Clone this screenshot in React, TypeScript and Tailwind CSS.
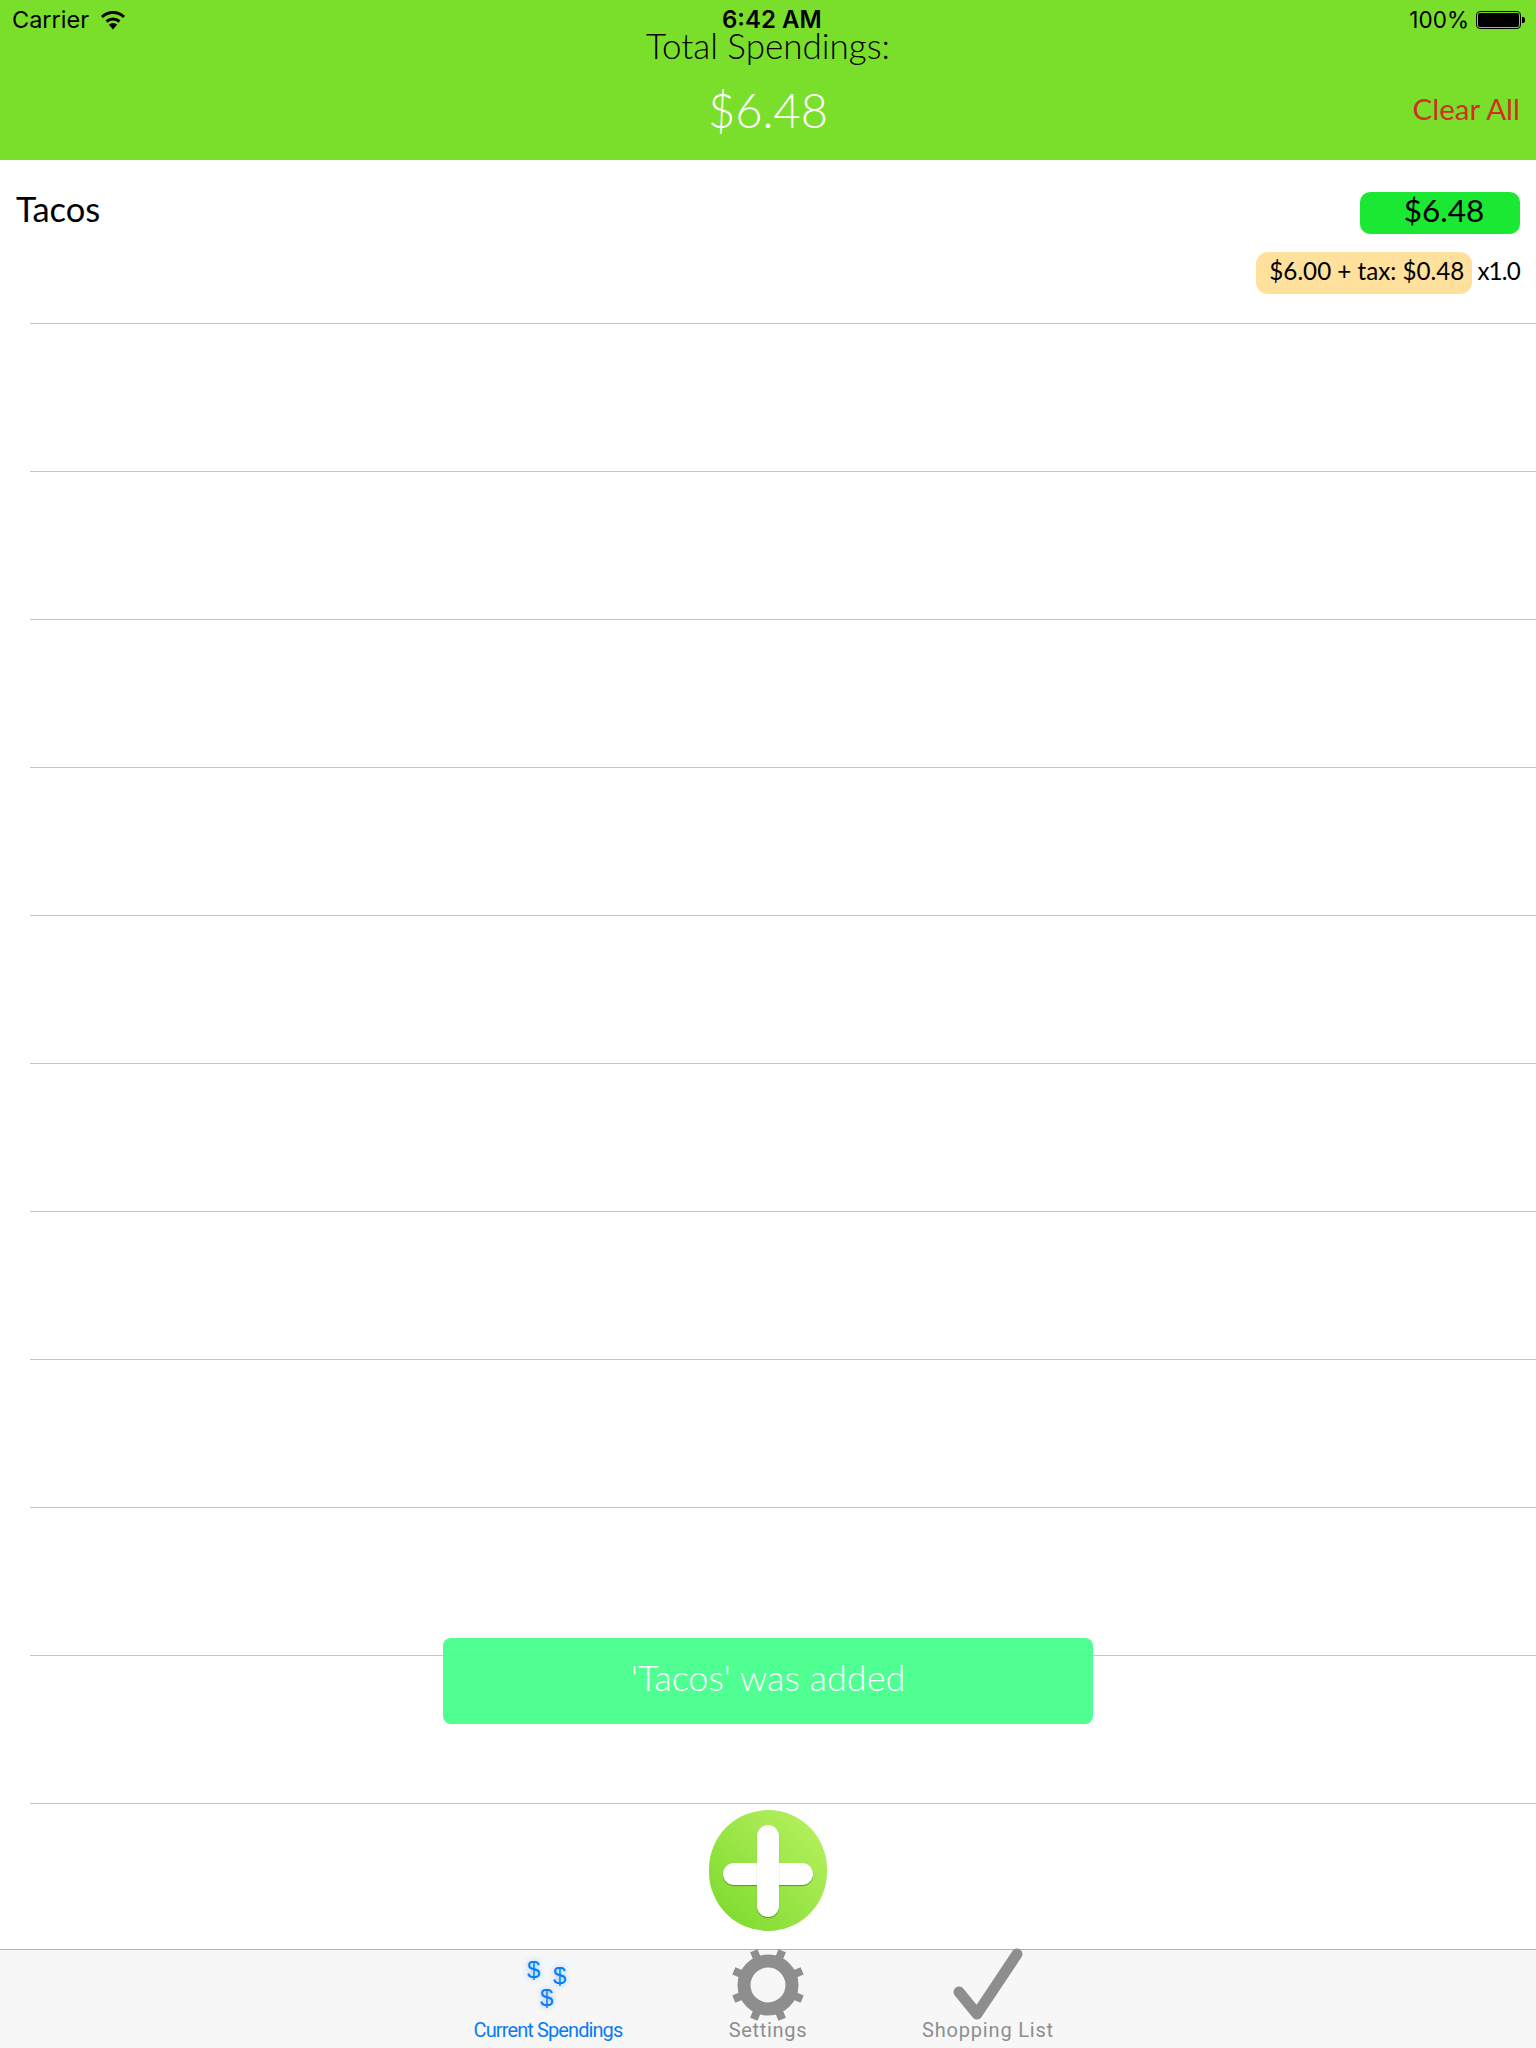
const ROWS = [0, 1, 2, 3, 4, 5, 6, 7, 8, 9];

function Wifi() {
  return (
    <svg width="26" height="20" viewBox="0 0 26 20" fill="none" stroke="#000" strokeWidth="3">
      <path d="M2 7 A16 16 0 0 1 24 7" />
      <path d="M6.5 11.5 A10 10 0 0 1 19.5 11.5" />
      <path d="M13 19.5 L8.8 14.6 A6 6 0 0 1 17.2 14.6 Z" fill="#000" stroke="none" />
    </svg>
  );
}

function Battery() {
  return (
    <svg width="49" height="20" viewBox="0 0 49 20">
      <rect x="0.5" y="1.5" width="44" height="17" rx="3.5" fill="none" stroke="#000" strokeWidth="1" />
      <rect x="2" y="3" width="41" height="14" rx="2" fill="#000" />
      <path d="M46 7 h1 a2 2 0 0 1 2 2 v2 a2 2 0 0 1 -2 2 h-1 z" fill="#000" />
    </svg>
  );
}

function Gear() {
  const teeth = [22.5, 67.5, 112.5, 157.5, 202.5, 247.5, 292.5, 337.5];
  return (
    <svg width="74" height="74" viewBox="-37 -37 74 74" className="-mt-[2px]">
      {teeth.map((a) => (
        <rect key={a} x="-4" y="-37" width="8" height="12" fill="#8e8e8e" transform={`rotate(${a})`} />
      ))}
      <circle r="24" fill="none" stroke="#8e8e8e" strokeWidth="13" />
    </svg>
  );
}

function Check() {
  return (
    <svg width="74" height="74" viewBox="0 0 74 74" className="-mt-[2px]">
      <path d="M8 44 L26 66 L66 6" fill="none" stroke="#8e8e8e" strokeWidth="11" strokeLinecap="round" strokeLinejoin="round" />
    </svg>
  );
}

function Dollars() {
  const d = "absolute font-['Liberation_Sans',sans-serif] text-[24px] leading-none text-[#0a7bf5] [text-shadow:0_0_6px_#8fc8ff]";
  return (
    <div className="relative h-[74px] w-[74px]">
      <span className={`${d} left-[16px] top-[8px]`}>$</span>
      <span className={`${d} left-[42px] top-[14px]`}>$</span>
      <span className={`${d} left-[29px] top-[36px]`}>$</span>
    </div>
  );
}

function Tab({ icon, label, cls }: { icon: React.ReactNode; label: string; cls: string }) {
  return (
    <div className="flex w-[220px] flex-col items-center">
      <div className="h-[68px]">{icon}</div>
      <span className={`font-['Roboto',sans-serif] text-[20px] leading-[24px] whitespace-nowrap ${cls}`}>{label}</span>
    </div>
  );
}

export default function App() {
  return (
    <div className="relative flex h-[2048px] w-[1536px] flex-col overflow-hidden bg-white font-['Lato',sans-serif] text-black">
      <header className="relative flex h-[160px] shrink-0 flex-col items-center bg-[#7adf2a]">
        <div className="absolute inset-x-0 top-0 flex h-[40px] items-center justify-between pl-[12px] pr-[11px] font-['Inter',sans-serif] text-[23.5px]">
          <div className="flex items-center gap-[11px]">
            <span>Carrier</span>
            <Wifi />
          </div>
          <span className="absolute left-[722px] text-[24px] font-semibold">6:42 AM</span>
          <div className="flex items-center gap-[7px] text-[22.5px]">
            <span>100%</span>
            <Battery />
          </div>
        </div>
        <div className="mt-[23px] text-[35px] leading-[44px] font-light">Total Spendings:</div>
        <div className="mt-[19px] text-[47px] leading-[48px] font-light text-white">$6.48</div>
        <button className="absolute right-[16px] top-[91px] text-[29.5px] leading-[36px] text-[#d12f22]">Clear All</button>
      </header>

      <main className="flex-1">
        <div className="flex h-[164px] items-start justify-between pl-[16px] pr-[16px] pt-[32px]">
          <div className="mt-[1px] text-[34.5px] leading-[32px]">Tacos</div>
          <div className="flex flex-col items-end gap-[18px]">
            <div className="flex h-[42px] w-[160px] items-center justify-center rounded-[10px] bg-[#1ae833] pb-[4px] pl-[8px] text-[31.5px]">$6.48</div>
            <div className="flex items-center gap-[5px] text-[24.2px]">
              <span className="flex h-[42px] w-[216px] items-center justify-center rounded-[12px] bg-[#ffe09c] pb-[3px] pl-[5px]">$6.00 + tax: $0.48</span>
              <span className="pb-[3px] tracking-[-0.8px]">x1.0</span>
            </div>
          </div>
        </div>
        <div className="ml-[30px] -mt-[1px] border-t border-[#c8c7cc]" />
        {ROWS.map((r) => (
          <div key={r} className="ml-[30px] h-[148px] border-b border-[#c8c7cc]" />
        ))}
      </main>

      <div className="absolute left-[443px] top-[1638px] flex h-[86px] w-[650px] items-center justify-center rounded-[8px] bg-[#47ff8c]/95 pb-[8px] text-[36px] font-light text-white">
        'Tacos' was added
      </div>

      <button className="absolute left-[709px] top-[1810px] h-[121px] w-[118px] rounded-full bg-gradient-to-tr from-[#76d925] to-[#bbf262]">
        <span className="absolute left-[14px] top-[53px] h-[22px] w-[90px] rounded-[11px] bg-white shadow-[0_1px_1px_#6a8a30]" />
        <span className="absolute left-[48px] top-[15px] h-[92px] w-[22px] rounded-[11px] bg-white shadow-[0_1px_1px_#6a8a30]" />
      </button>

      <nav className="flex h-[99px] shrink-0 justify-center border-t border-[#b2b2b2] bg-[#f7f7f7]">
        <Tab icon={<Dollars />} label="Current Spendings" cls="text-[#0a7bf5] tracking-[-0.9px]" />
        <Tab icon={<Gear />} label="Settings" cls="text-[#8e8e8e] tracking-[0.7px]" />
        <Tab icon={<Check />} label="Shopping List" cls="text-[#8e8e8e] tracking-[0.8px]" />
      </nav>
    </div>
  );
}
